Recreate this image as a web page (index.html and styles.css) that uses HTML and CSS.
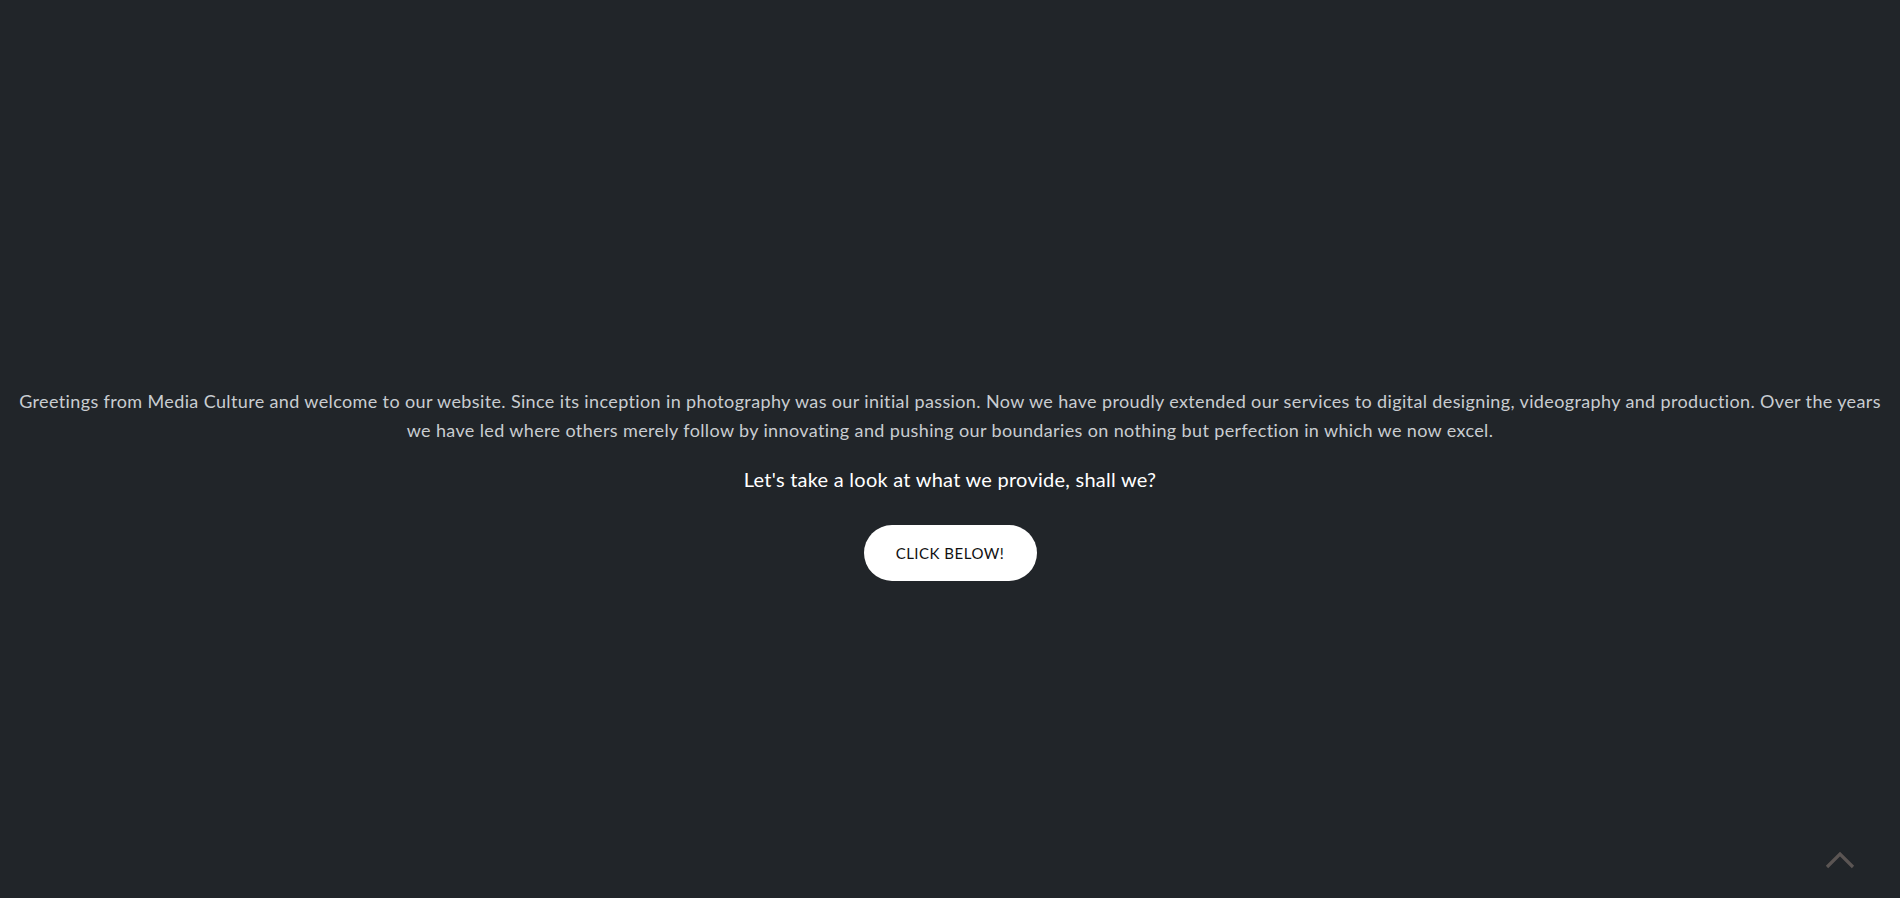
FILE: index.html
```html
<!DOCTYPE html>
<html lang="en">
<head>
<meta charset="utf-8">
<title>Media Culture</title>
<link rel="stylesheet" href="styles.css">
</head>
<body>
<main class="intro">
  <p class="lead">Greetings from Media Culture and welcome to our website. Since its inception in photography was our initial passion. Now we have proudly extended our services to digital designing, videography and production. Over the years we have led where others merely follow by innovating and pushing our boundaries on nothing but perfection in which we now excel.</p>
  <h2 class="ask">Let's take a look at what we provide, shall we?</h2>
  <a class="cta" href="#">CLICK BELOW!</a>
</main>
<a class="to-top" href="#" aria-label="Back to top">
  <svg width="30" height="18" viewBox="0 0 30 18"><path d="M2 16 L15 3 L28 16" fill="none" stroke="#5b5553" stroke-width="3.2"/></svg>
</a>
</body>
</html>
```
FILE: styles.css
```css
html, body {
  margin: 0;
  padding: 0;
  height: 100%;
  background: #212529;
  font-family: Lato, "Noto Sans", sans-serif;
}
.intro {
  display: flex;
  flex-direction: column;
  align-items: center;
  padding: 387px 10px 0;
  text-align: center;
}
.lead {
  margin: 0;
  font-size: 18px;
  line-height: 29px;
  letter-spacing: 0.37px;
  color: #c9cdd1;
}
.ask {
  margin: 20px 0 0;
  font-size: 20px;
  font-weight: 400;
  line-height: 28px;
  letter-spacing: 0.25px;
  color: #ffffff;
}
.cta {
  margin-top: 32px;
  display: inline-flex;
  align-items: center;
  justify-content: center;
  width: 173px;
  height: 56px;
  border-radius: 28px;
  background: #ffffff;
  color: #111;
  font-size: 15px;
  letter-spacing: 0.5px;
  text-decoration: none;
}
.to-top {
  position: fixed;
  right: 45px;
  bottom: 29px;
  display: block;
  line-height: 0;
}
```
